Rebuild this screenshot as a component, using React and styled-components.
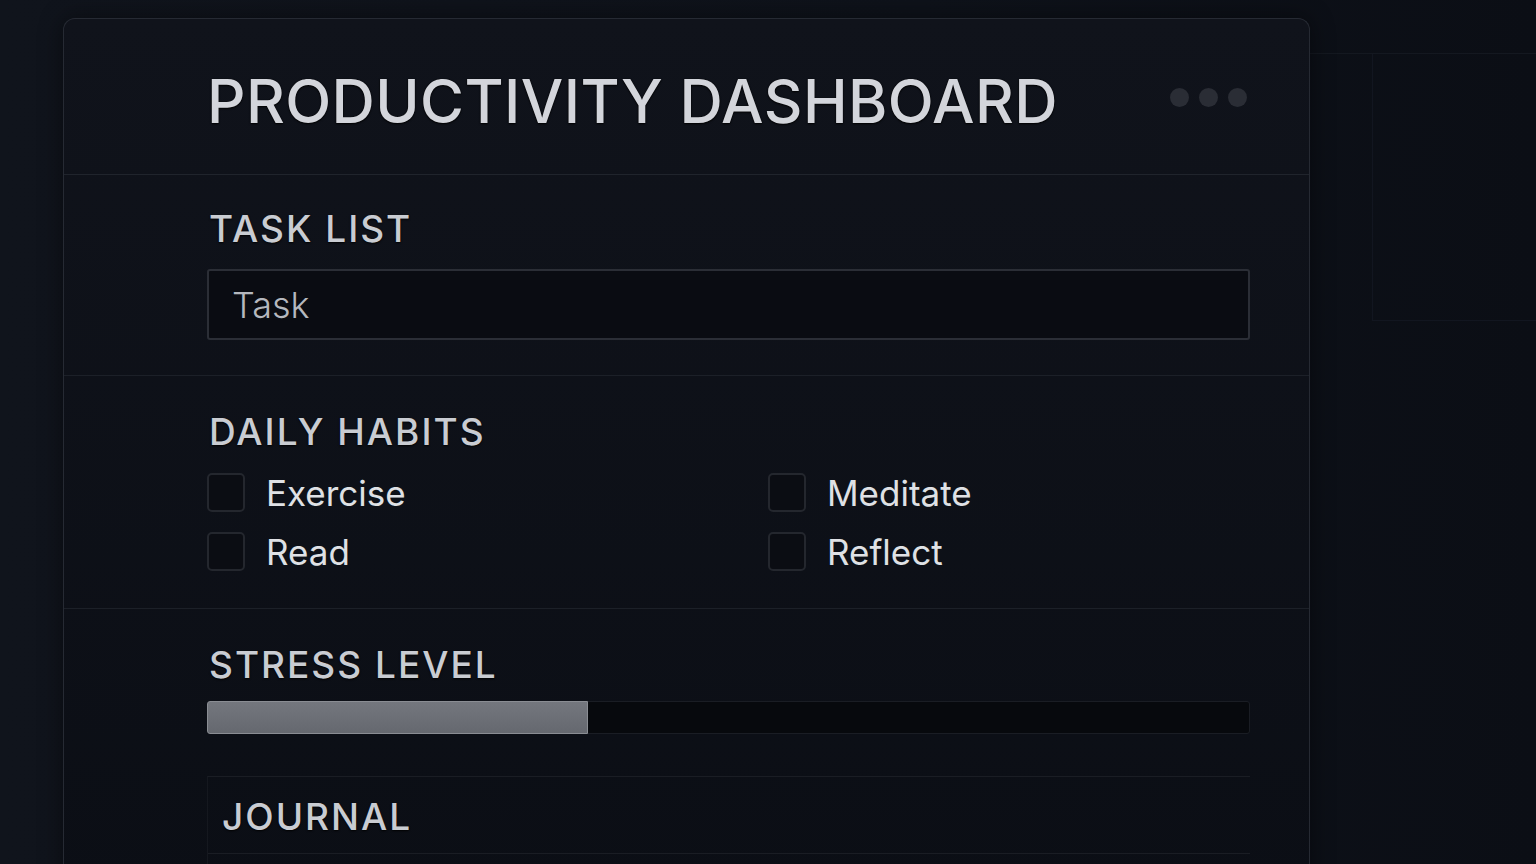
import React from 'react';
import styled, { createGlobalStyle } from 'styled-components';

const GlobalStyle = createGlobalStyle`
    html, body {
        margin: 0;
        padding: 0;
        height: 100%;
        overflow: hidden;
    }
    body {
        background: linear-gradient(90deg, #10141c 0%, #0e121a 60%, #0b0e15 100%);
        font-family: Inter, "Noto Sans", sans-serif;
    }
`;

const Page = styled.div`
    position: relative;
    width: 1536px;
    height: 864px;
    padding: 18px 0 0 63px;
    box-sizing: border-box;
    display: flex;
    align-items: flex-start;
`;

// faint panel outline behind the card, top right
const Backdrop = styled.div`
    position: absolute;
    left: 1300px;
    top: 53px;
    width: 236px;
    height: 268px;
    border-top: 1px solid #141820;
    box-sizing: border-box;
    &::after {
        content: '';
        position: absolute;
        left: 72px;
        top: 0;
        right: 0;
        bottom: 0;
        border-left: 1px solid #121620;
        border-bottom: 1px solid #121620;
    }
`;

const Card = styled.div`
    position: relative;
    width: 1247px;
    height: 900px;
    box-sizing: border-box;
    background: linear-gradient(180deg, #10131b 0%, #0b0e15 100%);
    border: 1.5px solid #262a33;
    border-bottom: none;
    border-radius: 12px 12px 0 0;
    box-shadow: 0 0 24px rgba(0, 0, 0, 0.45);
    display: flex;
    flex-direction: column;
`;

const Header = styled.div`
    height: 156px;
    display: flex;
    align-items: center;
    justify-content: space-between;
    padding: 0 62px 0 143px;
    border-bottom: 1.5px solid #20242c;
    box-sizing: border-box;
    flex-shrink: 0;
`;

const Title = styled.h1`
    margin: 8px 0 0;
    font-size: 60px;
    font-weight: 500;
    letter-spacing: 0.4px;
    color: #d3d5db;
    text-shadow: 0 1px 2px rgba(0, 0, 0, 0.9), 0 0 1px #000;
`;

const Dots = styled.div`
    display: flex;
    gap: 10px;
    margin-top: 2px;
`;

const Dot = styled.span`
    width: 19px;
    height: 19px;
    border-radius: 50%;
    background: #2a2d35;
`;

const Section = styled.div`
    padding: ${p => p.$pad};
    border-bottom: ${p => (p.$last ? 'none' : '1.5px solid #1c2028')};
    box-sizing: border-box;
    flex-shrink: 0;
`;

const Label = styled.div`
    font-size: 37px;
    font-weight: 500;
    letter-spacing: 2px;
    color: #c9ccd2;
    line-height: 44px;
    padding-left: ${p => p.$indent || 2}px;
    text-shadow: 0 1px 2px rgba(0, 0, 0, 0.9);
`;

const Input = styled.div`
    margin-top: ${p => p.$top}px;
    width: 1043px;
    height: 71px;
    box-sizing: border-box;
    border: 2px solid #2b2e36;
    border-radius: 3px;
    background: #0a0c12;
    display: flex;
    align-items: center;
    padding-left: 23px;
    font-size: 36px;
    font-weight: 300;
    color: #b5b8be;
`;

const HabitGrid = styled.div`
    display: grid;
    grid-template-columns: 561px 1fr;
    row-gap: 20px;
    margin-top: 19px;
`;

const Habit = styled.label`
    display: flex;
    align-items: center;
    gap: 21px;
    height: 39px;
    font-size: 35px;
    font-weight: 400;
    color: #dfe1e5;
`;

const Box = styled.span`
    width: 38px;
    height: 39px;
    box-sizing: border-box;
    border: 2px solid #24272e;
    border-radius: 5px;
    background: #0b0d13;
    flex-shrink: 0;
`;

const Track = styled.div`
    margin-top: 14px;
    width: 1043px;
    height: 33px;
    box-sizing: border-box;
    border: 1.5px solid #1a1d24;
    border-radius: 3px;
    background: #07090d;
    display: flex;
`;

const Fill = styled.div`
    background: linear-gradient(180deg, #74777e 0%, #65686f 100%);
    border: 1px solid #8a8d93;
    border-radius: 3px 0 0 3px;
    box-sizing: border-box;
    margin: -1.5px 0 -1.5px -1.5px;
    height: 33px;
`;

const Journal = styled.div`
    margin-top: 42px;
    width: 1043px;
    border-top: 1.5px solid #1a1d24;
    border-left: 1.5px solid #15181f;
    box-sizing: border-box;
    padding-top: 18px;
`;

const JournalBody = styled.div`
    margin-top: 14px;
    height: 60px;
    border-top: 1.5px solid #1a1d24;
`;

const habits = ['Exercise', 'Meditate', 'Read', 'Reflect'];

export default function App() {
    const stress = 36.6;
    return (
        <>
            <GlobalStyle />
            <Page>
                <Backdrop />
                <Card>
                    <Header>
                        <Title>PRODUCTIVITY DASHBOARD</Title>
                        <Dots>
                            <Dot />
                            <Dot />
                            <Dot />
                        </Dots>
                    </Header>
                    <Section $pad="32px 0 35px 143px">
                        <Label>TASK LIST</Label>
                        <Input $top={18}>Task</Input>
                    </Section>
                    <Section $pad="34px 0 37px 143px">
                        <Label>DAILY HABITS</Label>
                        <HabitGrid>
                            {habits.map(h => (
                                <Habit key={h}>
                                    <Box />
                                    {h}
                                </Habit>
                            ))}
                        </HabitGrid>
                    </Section>
                    <Section $last $pad="34px 0 0 143px">
                        <Label>STRESS LEVEL</Label>
                        <Track>
                            <Fill style={{ width: `${stress}%` }} />
                        </Track>
                        <Journal>
                            <Label $indent={14}>JOURNAL</Label>
                            <JournalBody />
                        </Journal>
                    </Section>
                </Card>
            </Page>
        </>
    );
}
